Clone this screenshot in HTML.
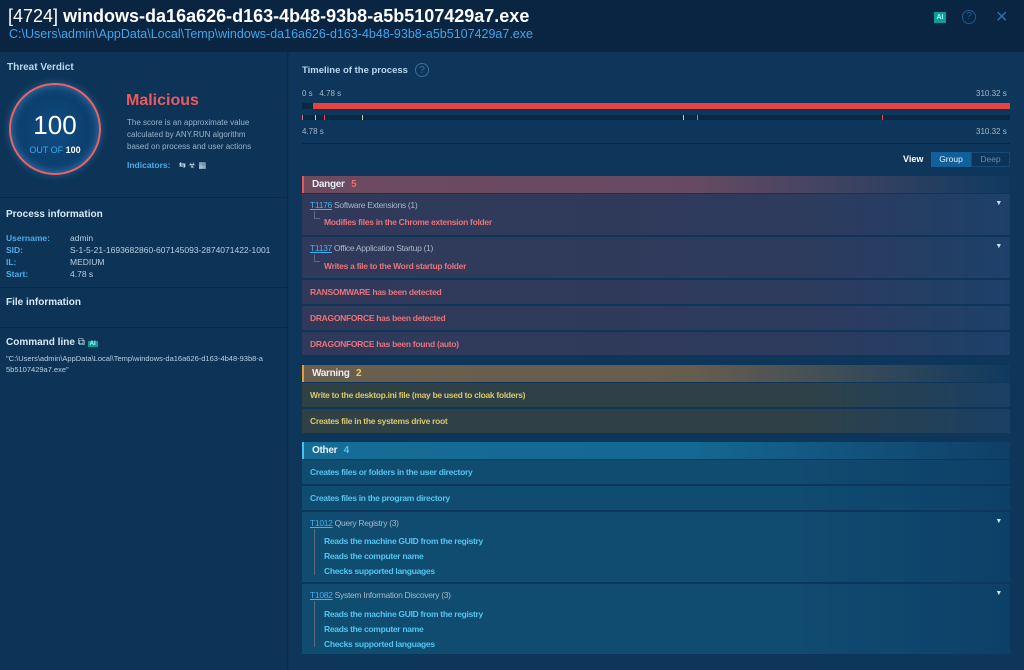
<!DOCTYPE html>
<html><head><meta charset="utf-8"><style>
*{box-sizing:border-box;margin:0;padding:0}
body{width:1024px;height:670px;overflow:hidden;background:#0c3052;font-family:"Liberation Sans",sans-serif;position:relative;color:#cfe3f2}
.a{position:absolute;white-space:nowrap}
#hdr{position:absolute;left:0;top:0;width:1024px;height:52px;background:#0a2542}
#left{position:absolute;left:0;top:52px;width:288px;height:618px;background:#0d3457;border-right:1px solid #0a2a48}
#right{position:absolute;left:289px;top:52px;width:735px;height:618px;background:#0e365a}
.hr{position:absolute;left:0;width:288px;height:1px;background:#0a2945}
.lbl{color:#4aaee8;font-weight:bold;font-size:8.5px}
.val{color:#b9cfe0;font-size:8.5px}
.sec{font-weight:bold;font-size:10px;color:#d6e8f5}
.blk{position:absolute;left:302px;width:708px;letter-spacing:-0.3px}
.row{position:absolute;left:302px;width:708px;font-size:8.5px;font-weight:bold;padding-left:8px;display:flex;align-items:center;letter-spacing:-0.3px}
.d{background:linear-gradient(90deg,#31395a 0%,#2e3b5c 70%,#1d406a 100%);color:#e8737a}
.w{background:linear-gradient(90deg,#2f4145 0%,#2f4147 70%,#1a4063 100%);color:#d7c86a}
.o{background:linear-gradient(90deg,#104b70 0%,#104b70 70%,#0d4068 100%);color:#52c6ee}
.t{color:#4aaee8;text-decoration:underline;font-weight:normal}
.g{color:#a4b7c8;font-weight:normal}
.sub{position:absolute;left:22px;font-size:8.5px;font-weight:bold}
.tr{position:absolute;left:12px;width:6px;border-left:1px solid #5a6a80;border-bottom:1px solid #5a6a80}
.car{position:absolute;right:8px;color:#cfe3f2;font-size:7px}
.hd{position:absolute;left:302px;width:708px;height:17px;font-size:10px;font-weight:bold;color:#e6eef5;padding-left:8px;line-height:17px;letter-spacing:-0.3px}
</style></head><body>
<div id="hdr"></div>
<div class="a" style="left:8px;top:6px;font-size:18px;color:#fff"><span style="font-weight:normal">[4724]</span> <b>windows-da16a626-d163-4b48-93b8-a5b5107429a7.exe</b></div>
<div class="a" style="left:9px;top:27px;font-size:12.5px;color:#3fa7ec">C:\Users\admin\AppData\Local\Temp\windows-da16a626-d163-4b48-93b8-a5b5107429a7.exe</div>
<div class="a" style="left:934px;top:12px;width:12px;height:11px;background:#0e9c97;color:#9ff;font-size:7px;font-weight:bold;text-align:center;line-height:11px">AI</div>
<div class="a" style="left:962px;top:10px;width:14px;height:14px;border:1.5px solid #1d5d8e;border-radius:50%;color:#1d5d8e;font-size:10px;text-align:center;line-height:11px">?</div>
<div class="a" style="left:995px;top:7px;color:#2a6fa3;font-size:16px">✕</div>

<div id="left"></div>
<div class="a sec" style="left:7px;top:62px;color:#b8d8ee">Threat Verdict</div>
<div class="a" style="left:9px;top:83px;width:92px;height:92px;border-radius:50%;border:2.5px solid #f0625f;background:radial-gradient(circle,#0f4d83 0%,#0b3a66 75%);box-shadow:0 0 10px #3a7fbf inset,0 0 8px #2a5f90"></div>
<div class="a" style="left:9px;top:110px;width:92px;text-align:center;font-size:26px;color:#fff">100</div>
<div class="a" style="left:9px;top:145px;width:92px;text-align:center;font-size:9px;color:#3fa7ec">OUT OF <b style="color:#fff">100</b></div>
<div class="a" style="left:126px;top:92px;font-size:16px;font-weight:bold;color:#ea5a5e">Malicious</div>
<div class="a" style="left:127px;top:117px;font-size:8px;color:#98b3c8;line-height:12px">The score is an approximate value<br>calculated by ANY.RUN algorithm<br>based on process and user actions</div>
<div class="a lbl" style="left:127px;top:160px">Indicators: <span style="color:#cfe3f2;font-weight:normal;margin-left:6px">⇆ ☣ ▦</span></div>
<div class="hr" style="top:197px"></div>
<div class="a sec" style="left:6px;top:209px">Process information</div>
<div class="a lbl" style="left:6px;top:232px;line-height:12px">Username:<br>SID:<br>IL:<br>Start:</div>
<div class="a val" style="left:70px;top:232px;line-height:12px">admin<br>S-1-5-21-1693682860-607145093-2874071422-1001<br>MEDIUM<br>4.78 s</div>
<div class="hr" style="top:287px"></div>
<div class="a sec" style="left:6px;top:297px">File information</div>
<div class="hr" style="top:327px"></div>
<div class="a sec" style="left:6px;top:337px">Command line <span style="color:#cfe3f2;font-weight:normal">⧉</span> <span style="background:#0e9c97;color:#9ff;font-size:6px;padding:0 2px">AI</span></div>
<div class="a" style="left:6px;top:353px;font-size:7.5px;color:#b9cfe0;line-height:11px">"C:\Users\admin\AppData\Local\Temp\windows-da16a626-d163-4b48-93b8-a<br>5b5107429a7.exe"</div>

<div id="right"></div>
<div class="a" style="left:302px;top:65px;font-size:9.5px;font-weight:bold;color:#b8d8ee">Timeline of the process</div>
<div class="a" style="left:415px;top:63px;width:14px;height:14px;border:1px solid #3a6f99;border-radius:50%;color:#3a6f99;font-size:10px;text-align:center;line-height:13px">?</div>
<div class="a" style="left:302px;top:89px;font-size:8px;color:#a4b7c8">0 s &nbsp;&nbsp;4.78 s</div>
<div class="a" style="left:976px;top:89px;font-size:8px;color:#a4b7c8">310.32 s</div>
<div class="a" style="left:302px;top:103px;width:708px;height:6px;background:#0a2744"></div>
<div class="a" style="left:313px;top:103px;width:697px;height:6px;background:#e8413f"></div>
<div class="a" style="left:302px;top:115px;width:708px;height:5px;background:#0a2744"></div>
<div class="a" style="left:302px;top:115px;width:1px;height:5px;background:#c77"></div>
<div class="a" style="left:315px;top:115px;width:1px;height:5px;background:#cc9"></div>
<div class="a" style="left:324px;top:115px;width:1px;height:5px;background:#e44"></div>
<div class="a" style="left:362px;top:115px;width:1px;height:5px;background:#cc9"></div>
<div class="a" style="left:683px;top:115px;width:1px;height:5px;background:#cc9"></div>
<div class="a" style="left:697px;top:115px;width:1px;height:5px;background:#c77"></div>
<div class="a" style="left:882px;top:115px;width:1px;height:5px;background:#e44"></div>
<div class="a" style="left:302px;top:127px;font-size:8px;color:#a4b7c8">4.78 s</div>
<div class="a" style="left:976px;top:127px;font-size:8px;color:#a4b7c8">310.32 s</div>
<div class="a" style="left:302px;top:143px;width:708px;height:1px;background:#0a2744"></div>
<div class="a" style="left:903px;top:154px;font-size:9px;font-weight:bold;color:#fff">View</div>
<div class="a" style="left:931px;top:152px;width:40px;height:15px;background:#11609a;color:#dfeefa;font-size:8.5px;text-align:center;line-height:15px">Group</div>
<div class="a" style="left:971px;top:152px;width:39px;height:15px;background:#0c3458;border:1px solid #144b74;color:#5f8eb3;font-size:8.5px;text-align:center;line-height:13px">Deep</div>

<div class="hd" style="top:176px;background:linear-gradient(90deg,#6e4a5f 0%,#674a62 55%,#0f3a60 100%);border-left:2px solid #e8545a">Danger <span style="color:#f06a6e;margin-left:4px">5</span></div>
<div class="blk d" style="top:194px;height:41px"><div class="a" style="left:8px;top:6px;font-size:8.5px"><span class="t">T1176</span> <span class="g">Software Extensions (1)</span></div><div class="tr" style="top:17px;height:8px"></div><div class="sub" style="top:23px">Modifies files in the Chrome extension folder</div><div class="car" style="top:6px">▼</div></div>
<div class="blk d" style="top:237px;height:41px"><div class="a" style="left:8px;top:6px;font-size:8.5px"><span class="t">T1137</span> <span class="g">Office Application Startup (1)</span></div><div class="tr" style="top:17px;height:8px"></div><div class="sub" style="top:24px">Writes a file to the Word startup folder</div><div class="car" style="top:6px">▼</div></div>
<div class="row d" style="top:280px;height:24px">RANSOMWARE has been detected</div>
<div class="row d" style="top:306px;height:24px">DRAGONFORCE has been detected</div>
<div class="row d" style="top:332px;height:23px">DRAGONFORCE has been found (auto)</div>

<div class="hd" style="top:365px;background:linear-gradient(90deg,#6b5e4d 0%,#675d4f 55%,#0f3a60 100%);border-left:2px solid #e89a3a">Warning <span style="color:#e8d25a;margin-left:4px">2</span></div>
<div class="row w" style="top:383px;height:24px">Write to the desktop.ini file (may be used to cloak folders)</div>
<div class="row w" style="top:409px;height:24px">Creates file in the systems drive root</div>

<div class="hd" style="top:442px;background:linear-gradient(90deg,#156d96 0%,#146893 55%,#0f3f66 100%);border-left:2px solid #3fc3ef">Other <span style="color:#4fc8f0;margin-left:4px">4</span></div>
<div class="row o" style="top:460px;height:24px">Creates files or folders in the user directory</div>
<div class="row o" style="top:486px;height:24px">Creates files in the program directory</div>
<div class="blk o" style="top:512px;height:70px"><div class="a" style="left:8px;top:6px;font-size:8.5px"><span class="t">T1012</span> <span class="g">Query Registry (3)</span></div><div class="tr" style="top:17px;height:46px;border-bottom:none"></div><div class="sub" style="top:24px">Reads the machine GUID from the registry</div><div class="sub" style="top:39px">Reads the computer name</div><div class="sub" style="top:54px">Checks supported languages</div><div class="car" style="top:6px">▼</div></div>
<div class="blk o" style="top:584px;height:70px"><div class="a" style="left:8px;top:6px;font-size:8.5px"><span class="t">T1082</span> <span class="g">System Information Discovery (3)</span></div><div class="tr" style="top:17px;height:46px;border-bottom:none"></div><div class="sub" style="top:25px">Reads the machine GUID from the registry</div><div class="sub" style="top:40px">Reads the computer name</div><div class="sub" style="top:55px">Checks supported languages</div><div class="car" style="top:6px">▼</div></div>
</body></html>
